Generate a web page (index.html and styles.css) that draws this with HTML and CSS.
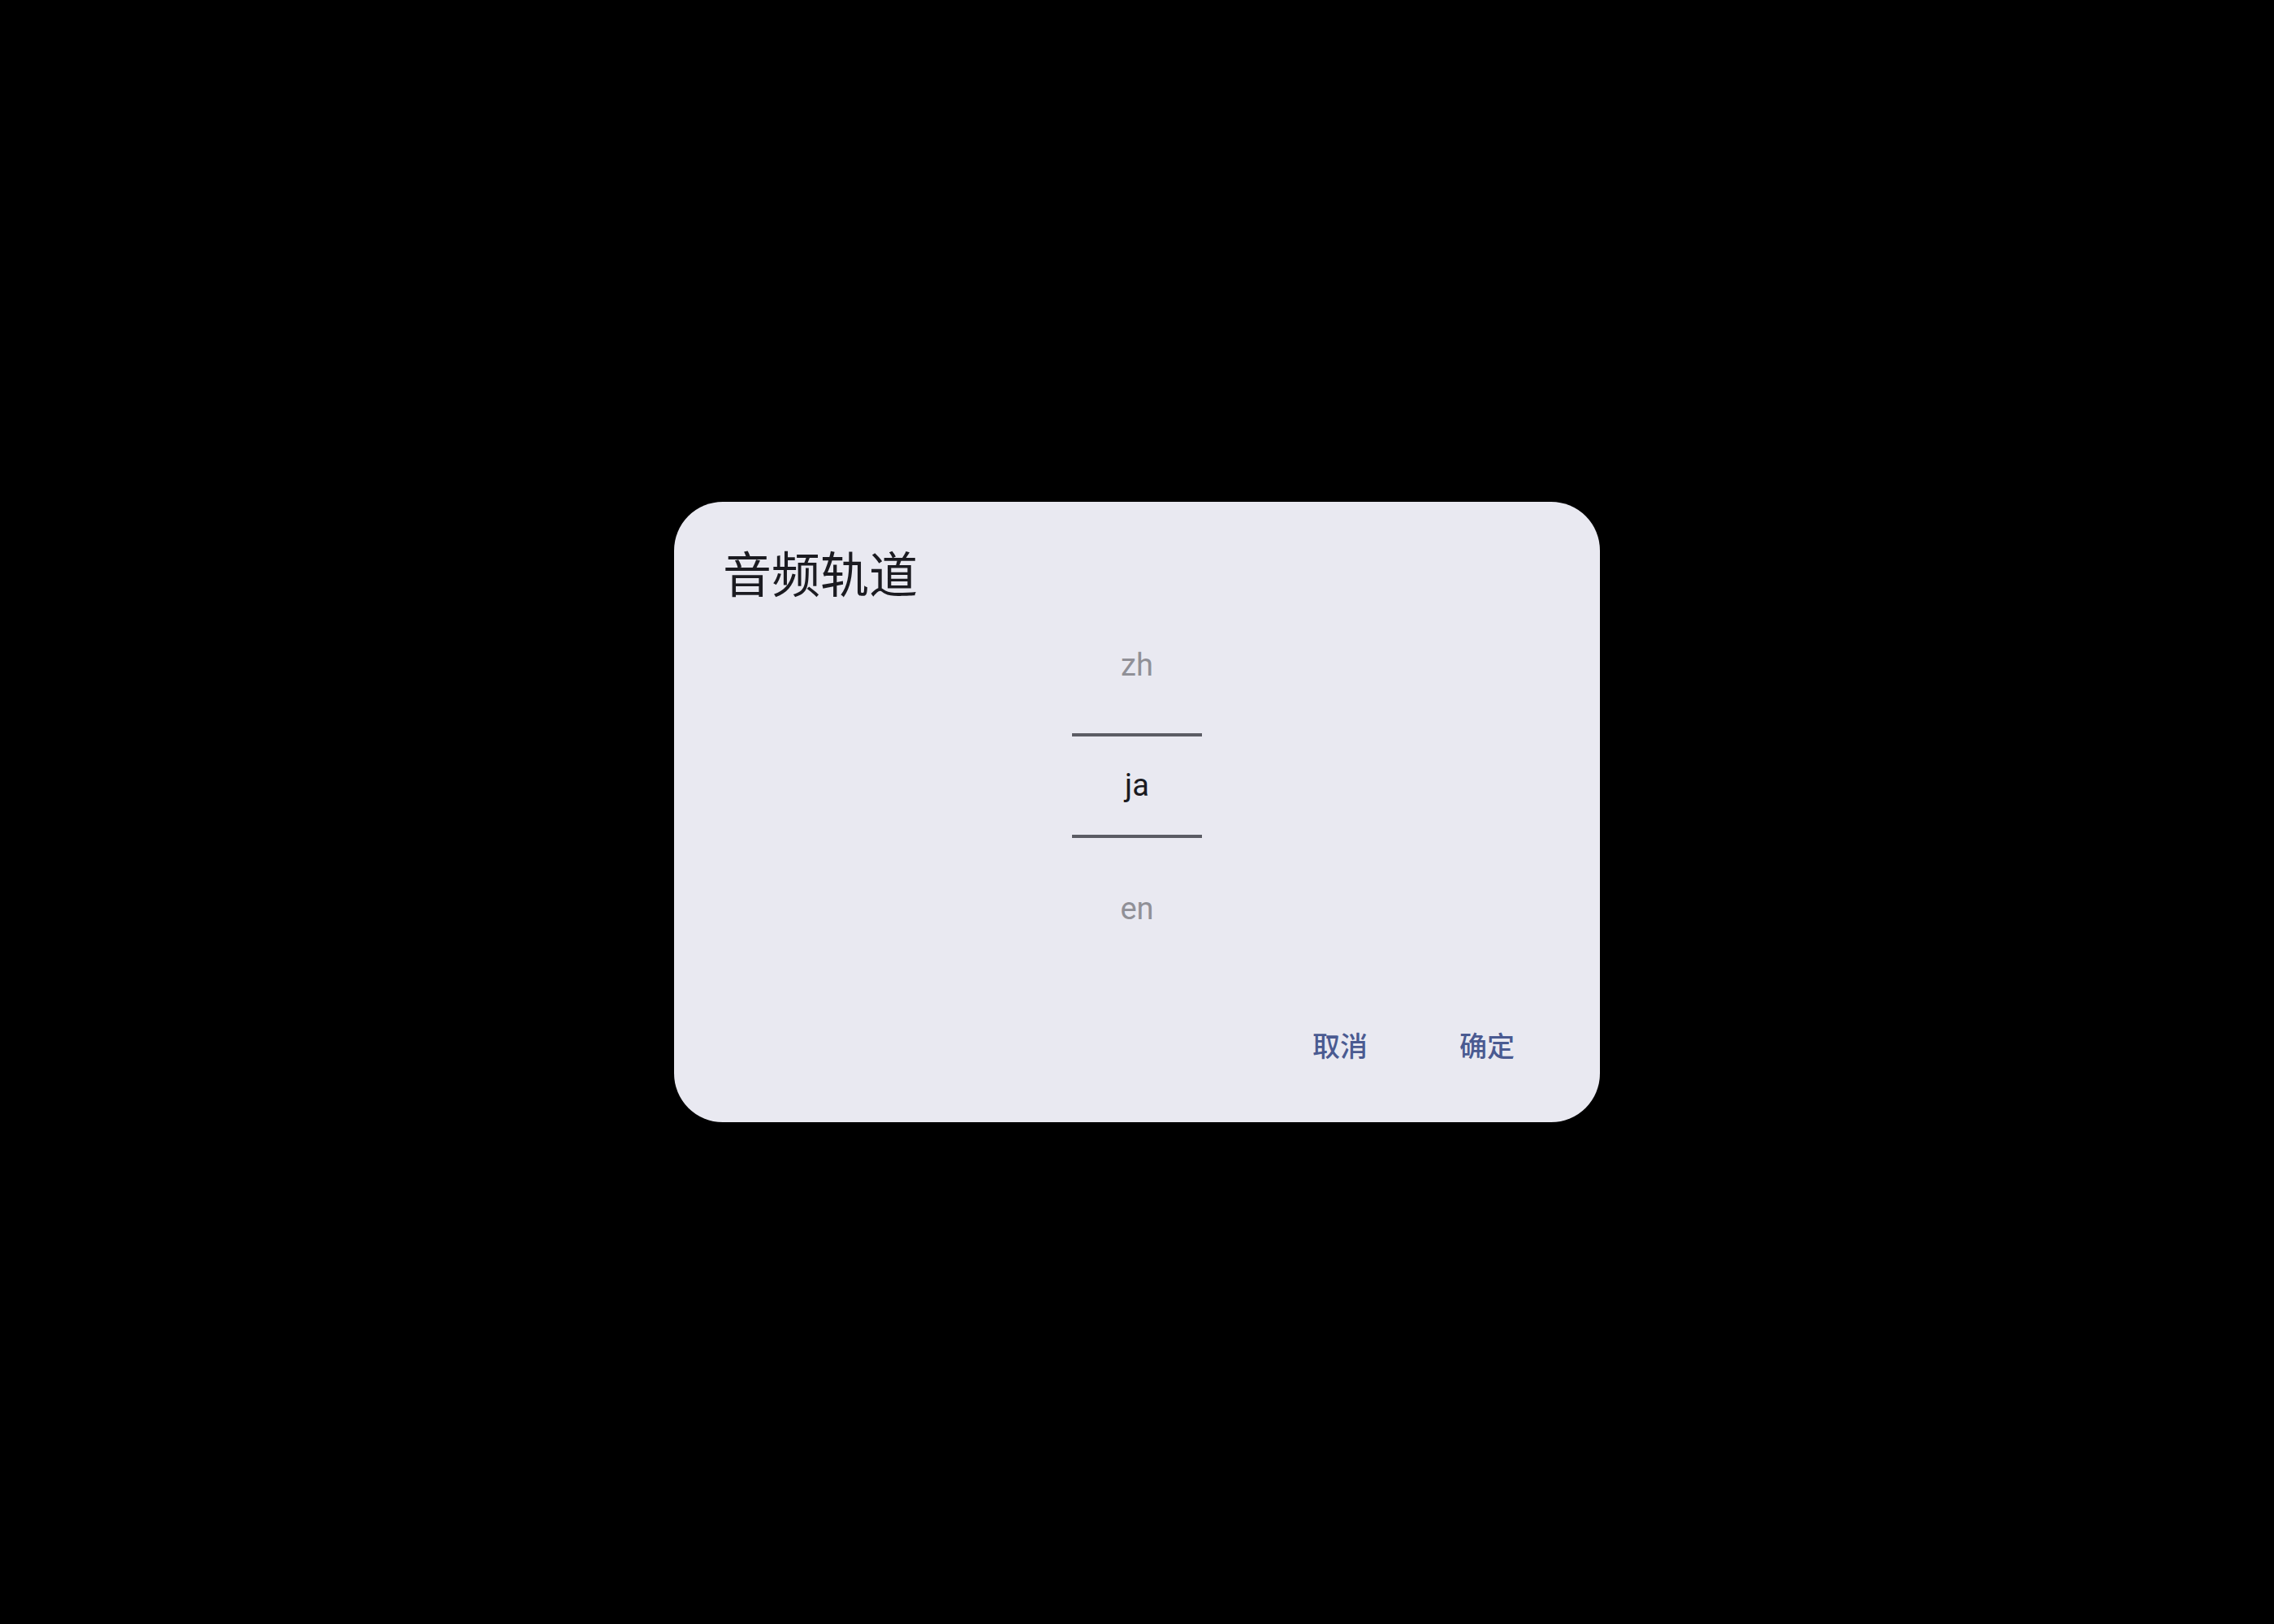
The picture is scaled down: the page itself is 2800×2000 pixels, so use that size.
FILE: index.html
```html
<!DOCTYPE html>
<html lang="zh">
<head>
<meta charset="utf-8">
<title>音频轨道</title>
<link rel="stylesheet" href="styles.css">
</head>
<body>
<div class="dialog">
  <div class="title">音频轨道</div>
  <div class="picker">
    <div class="item item-side item-top">zh</div>
    <div class="divider"></div>
    <div class="item item-selected">ja</div>
    <div class="divider"></div>
    <div class="item item-side item-bottom">en</div>
  </div>
  <div class="actions">
    <div class="btn">取消</div>
    <div class="btn">确定</div>
  </div>
</div>
</body>
</html>
```
FILE: styles.css
```css
html, body {
  margin: 0;
  padding: 0;
}
body {
  background: #000;
  width: 2800px;
  height: 2000px;
  display: flex;
  align-items: center;
  justify-content: center;
}
.dialog {
  width: 1140px;
  height: 764px;
  box-sizing: border-box;
  background: #e9e9f1;
  border-radius: 60px;
  padding: 44px 74px 70px 60px;
  display: flex;
  flex-direction: column;
  font-family: "Noto Sans CJK SC", "Noto Sans", sans-serif;
}
.title {
  font-size: 60px;
  line-height: 84px;
  color: #1b1b21;
  font-weight: 400;
}
.picker {
  align-self: center;
  width: 160px;
  margin-left: 14px;
  display: flex;
  flex-direction: column;
  align-items: stretch;
  margin-top: 43px;
}
.item {
  font-family: Roboto, "Noto Sans", sans-serif;
  font-size: 38px;
  text-align: center;
  height: 60px;
  line-height: 60px;
}
.item-side {
  color: #909097;
}
.item-top {
  margin-bottom: 54px;
}
.item-bottom {
  margin-top: 57px;
}
.item-selected {
  color: #1b1b21;
  height: 121px;
  line-height: 121px;
}
.divider {
  height: 4px;
  background: #5b5c64;
}
.actions {
  margin-top: auto;
  display: flex;
  justify-content: flex-end;
  gap: 51px;
}
.btn {
  font-size: 34px;
  line-height: 50px;
  padding: 0 31px;
  font-weight: 500;
  color: #4a5a91;
}
```
